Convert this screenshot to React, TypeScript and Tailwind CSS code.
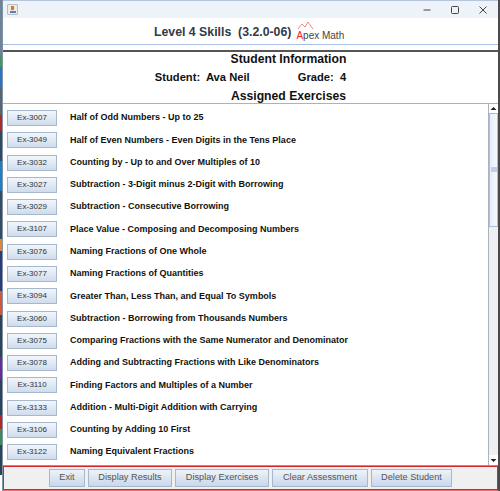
const exercises = [
  ['Ex-3007', 'Half of Odd Numbers - Up to 25'],
  ['Ex-3049', 'Half of Even Numbers - Even Digits in the Tens Place'],
  ['Ex-3032', 'Counting by - Up to and Over Multiples of 10'],
  ['Ex-3027', 'Subtraction - 3-Digit minus 2-Digit with Borrowing'],
  ['Ex-3029', 'Subtraction - Consecutive Borrowing'],
  ['Ex-3107', 'Place Value - Composing and Decomposing Numbers'],
  ['Ex-3076', 'Naming Fractions of One Whole'],
  ['Ex-3077', 'Naming Fractions of Quantities'],
  ['Ex-3094', 'Greater Than, Less Than, and Equal To Symbols'],
  ['Ex-3060', 'Subtraction - Borrowing from Thousands Numbers'],
  ['Ex-3075', 'Comparing Fractions with the Same Numerator and Denominator'],
  ['Ex-3078', 'Adding and Subtracting Fractions with Like Denominators'],
  ['Ex-3110', 'Finding Factors and Multiples of a Number'],
  ['Ex-3133', 'Addition - Multi-Digit Addition with Carrying'],
  ['Ex-3106', 'Counting by Adding 10 First'],
  ['Ex-3122', 'Naming Equivalent Fractions'],
]

const footerButtons = [
  ['Exit', 'w-[36px]'],
  ['Display Results', 'w-[84px]'],
  ['Display Exercises', 'w-[94px]'],
  ['Clear Assessment', 'w-[96px]'],
  ['Delete Student', 'w-[81px]'],
]

// strip of desktop showing down the left of the window
const desktopLeft = [
  ['h-[55px]', 'bg-[#6f8296]'],
  ['h-[12px]', 'bg-[#3f9a5a]'],
  ['h-[20px]', 'bg-[#2f74c4]'],
  ['h-[28px]', 'bg-[#5a6470]'],
  ['h-[16px]', 'bg-[#b3262c]'],
  ['h-[30px]', 'bg-[#34495e]'],
  ['h-[30px]', 'bg-[#1f7fc4]'],
  ['h-[48px]', 'bg-[#3a4a60]'],
  ['h-[12px]', 'bg-[#e0883a]'],
  ['h-[40px]', 'bg-[#2c3a78]'],
  ['h-[24px]', 'bg-[#d8543a]'],
  ['h-[42px]', 'bg-[#2f4258]'],
  ['h-[22px]', 'bg-[#6a2a9a]'],
  ['h-[36px]', 'bg-[#2f4258]'],
  ['h-[14px]', 'bg-[#b3262c]'],
  ['h-[16px]', 'bg-[#3f8a55]'],
  ['h-[30px]', 'bg-[#2f4258]'],
]

export default function App() {
  return (
    <div className="flex h-[491px] w-[500px] overflow-hidden font-['Liberation_Sans',sans-serif]">
      <div className="flex w-[2px] shrink-0 flex-col">
        {desktopLeft.map(([height, colour], i) => (
          <div key={i} className={`${height} ${colour}`} />
        ))}
      </div>
      <div className="flex min-w-0 flex-1 flex-col border-l border-[#7f93a8] bg-white">
        {/* Title bar */}
        <div className="flex h-[18px] shrink-0 items-center justify-between border-t border-[#b4c6dc] bg-[#eef3f9] pl-[4px]">
          <div className="flex h-[11px] w-[11px] flex-col items-center justify-center rounded-[1px] border border-[#b5bdc8] bg-[#efeae2]">
            <div className="h-[4px] w-[3px] bg-[#e0702a]" />
            <div className="mt-[1px] h-[2px] w-[6px] bg-[#5a7fb0]" />
          </div>
          <div className="flex items-center">
            <svg width="10" height="10" viewBox="0 0 10 10" className="mr-[18px]">
              <path d="M1.5 5h7" stroke="#444" strokeWidth="1" />
            </svg>
            <svg width="10" height="10" viewBox="0 0 10 10" className="mr-[18px]">
              <rect x="1.5" y="1.5" width="7" height="7" rx="1" fill="none" stroke="#444" strokeWidth="1" />
            </svg>
            <svg width="10" height="10" viewBox="0 0 10 10" className="mr-[10px]">
              <path d="M1.5 1.5l7 7M8.5 1.5l-7 7" stroke="#444" strokeWidth="1" />
            </svg>
          </div>
        </div>

        {/* Header */}
        <div className="flex h-[27px] shrink-0 items-center border-b border-[#a9bfe3] pt-[2px] pl-[151px]">
          <span className="text-[12.3px] font-bold whitespace-pre text-[#333a45]">Level 4 Skills  (3.2.0-06)</span>
          <div className="relative ml-[5px] h-[24px] w-[48px]">
            <svg width="18" height="10" viewBox="0 0 18 10" className="absolute top-[1px] left-[1px]">
              <path d="M1 8l4-5 3 3 3-5 5 7" fill="none" stroke="#ee6a6a" strokeWidth="0.8" />
            </svg>
            <span className="absolute top-[8px] left-0 text-[10px] whitespace-nowrap text-[#444]">
              <span className="text-[#e8262c]">A</span>pex Math
            </span>
          </div>
        </div>

        <div className="h-[5px] shrink-0 bg-white" />

        {/* Student info */}
        <div className="flex h-[54px] shrink-0 flex-col items-center border-t-2 border-b border-t-[#555] border-b-[#a7b3c4] text-[#111]">
          <div className="h-[15px] pl-[76px] text-[12.2px] leading-[15px] font-bold">Student Information</div>
          <div className="flex h-[20px] text-[11.2px] leading-[20px] font-bold whitespace-pre">
            <span>Student:  Ava Neil</span>
            <span className="ml-[48px]">Grade:  4</span>
          </div>
          <div className="h-[16px] pl-[76px] text-[12.2px] leading-[19px] font-bold">Assigned Exercises</div>
        </div>

        {/* Exercise list */}
        <div className="flex min-h-0 flex-1 border-b border-[#9a9a9a]">
          <div className="min-w-0 flex-1 overflow-hidden pt-[3px] pl-[4px]">
            {exercises.map(([id, title]) => (
              <div key={id} className="flex h-[22.27px] items-center">
                <div className="flex h-[16px] w-[50px] shrink-0 items-center justify-center border border-[#a8b8cc] bg-gradient-to-b from-[#f2f6fb] to-[#cfdcec] text-[8px] text-[#333]">
                  {id}
                </div>
                <span className="ml-[13px] text-[9px] font-bold whitespace-nowrap text-[#111]">{title}</span>
              </div>
            ))}
          </div>
          {/* Scrollbar */}
          <div className="flex w-[10px] shrink-0 flex-col border-l border-[#a9b3c0] bg-[#eef0f2]">
            <div className="flex h-[9px] items-center justify-center bg-white text-[#222]">
              <svg width="7" height="5" viewBox="0 0 7 5">
                <path d="M3.5 1L6.5 4H.5z" fill="currentColor" />
              </svg>
            </div>
            <div className="relative h-[114px] border border-[#a6bde6] bg-gradient-to-r from-[#e6eefa] to-[#f7f9fd]">
              <div className="absolute top-[53px] left-[1px] h-[5px] w-[6px] bg-[#bcd0ee]" />
            </div>
            <div className="flex-1" />
            <div className="flex h-[10px] items-center justify-center bg-white text-[#222]">
              <svg width="7" height="5" viewBox="0 0 7 5">
                <path d="M3.5 4L6.5 1H.5z" fill="currentColor" />
              </svg>
            </div>
          </div>
        </div>

        {/* Footer */}
        <div className="flex h-[24px] shrink-0 items-center gap-[3px] border border-[#d9262c] bg-[#f0f0f0] pl-[45px]">
          {footerButtons.map(([label, width]) => (
            <div
              key={label}
              className={`flex h-[18px] items-center justify-center border border-[#a8b8cc] bg-gradient-to-b from-[#eef3f9] to-[#c9d8ea] text-[9.2px] whitespace-nowrap text-[#555] ${width}`}
            >
              {label}
            </div>
          ))}
        </div>
        <div className="h-[1px] shrink-0 bg-[#f06a6a]" />
      </div>
      <div className="w-[2px] shrink-0 bg-[#4a4a4a]" />
    </div>
  )
}
